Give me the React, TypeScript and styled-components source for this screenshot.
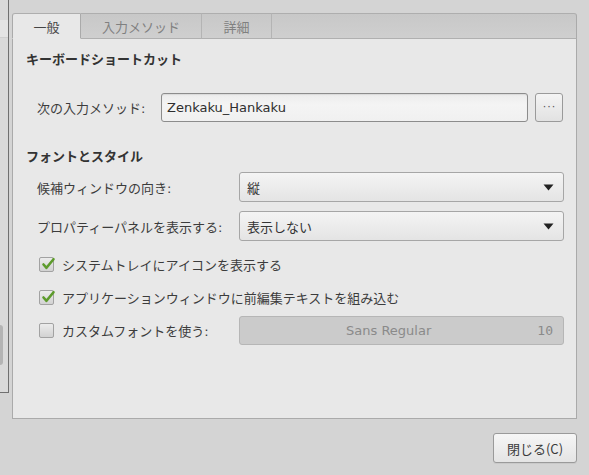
import styled, { createGlobalStyle } from "styled-components";

const GlobalStyle = createGlobalStyle`
  html, body {
    margin: 0;
    padding: 0;
    background: #d4d4d4;
  }
  body {
    width: 589px;
    height: 475px;
    overflow: hidden;
    font-family: "DejaVu Sans", "Noto Sans CJK JP", sans-serif;
    font-size: 13px;
    color: #3c3c3c;
  }
`;

const tabs = ["一般", "入力メソッド", "詳細"];

export default function App() {
  return (
    <>
      <GlobalStyle />
      <Screen>
        <BehindWindow>
          <BehindTab />
          <BehindKnob />
        </BehindWindow>
        <Dialog>
          <Notebook>
            <TabStrip>
              {tabs.map((t, i) => (
                <Tab key={t} active={i === 0} w={[69, 121, 70][i]}>
                  {t}
                </Tab>
              ))}
              <TabFill />
            </TabStrip>
            <Page>
              <SectionTitle>キーボードショートカット</SectionTitle>
              <EntryRow>
                <Label>次の入力メソッド:</Label>
                <Entry>Zenkaku_Hankaku</Entry>
                <SmallButton>
                  <Dots>···</Dots>
                </SmallButton>
              </EntryRow>

              <SectionTitle top={25}>フォントとスタイル</SectionTitle>
              <ComboRow top={7}>
                <Label>候補ウィンドウの向き:</Label>
                <Combo>
                  <span>縦</span>
                  <Arrow />
                </Combo>
              </ComboRow>
              <ComboRow top={9}>
                <Label>プロパティーパネルを表示する:</Label>
                <Combo>
                  <span>表示しない</span>
                  <Arrow />
                </Combo>
              </ComboRow>

              <CheckList>
                <CheckRow>
                  <CheckBox checked>
                    <CheckMark />
                  </CheckBox>
                  <span>システムトレイにアイコンを表示する</span>
                </CheckRow>
                <CheckRow>
                  <CheckBox checked>
                    <CheckMark />
                  </CheckBox>
                  <span>アプリケーションウィンドウに前編集テキストを組み込む</span>
                </CheckRow>
                <CheckRow>
                  <CheckBox />
                  <FontLabel>カスタムフォントを使う:</FontLabel>
                  <FontButton>
                    <FontName>Sans Regular</FontName>
                    <FontSize>10</FontSize>
                  </FontButton>
                </CheckRow>
              </CheckList>
            </Page>
          </Notebook>
          <Footer>
            <CloseButton>閉じる(C)</CloseButton>
          </Footer>
        </Dialog>
      </Screen>
    </>
  );
}

function Arrow() {
  return (
    <svg width="11" height="7" viewBox="0 0 11 7">
      <path d="M0.5 0.5 H10.5 L5.5 6.5 Z" fill="#222" />
    </svg>
  );
}

function CheckMark() {
  return (
    <svg width="15" height="14" viewBox="0 0 15 14" style={{ position: "absolute", left: 1, top: -1 }}>
      <path
        d="M2.5 7.5 L5.5 10.8 L12.5 2.2"
        fill="none"
        stroke="#5d9b2c"
        strokeWidth="2.6"
        strokeLinecap="round"
        strokeLinejoin="round"
      />
    </svg>
  );
}

const Screen = styled.div`
  display: flex;
  width: 589px;
  height: 475px;
`;

const BehindWindow = styled.div`
  position: relative;
  width: 8px;
  height: 392px;
  flex: none;
  background: #dadada;
  border-right: 1px solid #707070;
  border-bottom: 1px solid #707070;
`;

const BehindTab = styled.div`
  position: absolute;
  left: 0;
  top: 20px;
  width: 8px;
  height: 17px;
  background: #e4e4e4;
  border-bottom: 1px solid #cfcfcf;
`;

const BehindKnob = styled.div`
  position: absolute;
  left: 0;
  top: 325px;
  width: 3px;
  height: 40px;
  background: #b4b4b4;
  border-radius: 0 3px 3px 0;
`;

const Dialog = styled.div`
  display: flex;
  flex-direction: column;
  width: 565px;
  margin-left: 3px;
  padding-top: 13px;
`;

const Notebook = styled.div`
  display: flex;
  flex-direction: column;
  width: 565px;
`;

const TabStrip = styled.div`
  display: flex;
  height: 26px;
`;

const Tab = styled.div<{ active?: boolean; w: number }>`
  width: ${({ w }) => w}px;
  box-sizing: border-box;
  display: flex;
  align-items: center;
  justify-content: center;
  font-family: "Noto Sans CJK JP", sans-serif;
  font-size: 13px;
  color: ${({ active }) => (active ? "#444" : "#808080")};
  background: ${({ active }) =>
    active ? "#e8e8e8" : "linear-gradient(#c8c8c8, #cfcfcf)"};
  border-top: 1px solid #aeaeae;
  border-left: ${({ active }) => (active ? "1px solid #aaa" : "none")};
  border-right: 1px solid ${({ active }) => (active ? "#aaa" : "#b4b4b4")};
  border-bottom: 1px solid ${({ active }) => (active ? "#e8e8e8" : "#b0b0b0")};
  border-radius: ${({ active }) => (active ? "3px 0 0 0" : "0")};
  padding-top: 1px;
`;

const TabFill = styled.div`
  flex: 1;
  box-sizing: border-box;
  background: linear-gradient(#c8c8c8, #cfcfcf);
  border-top: 1px solid #aeaeae;
  border-right: 1px solid #aaa;
  border-bottom: 1px solid #b0b0b0;
  border-radius: 0 3px 0 0;
`;

const Page = styled.div`
  box-sizing: border-box;
  height: 380px;
  background: #e8e8e8;
  border: 1px solid #aaa;
  border-top: none;
  padding: 0 12px 0 13px;
  display: flex;
  flex-direction: column;
`;

const SectionTitle = styled.div<{ top?: number }>`
  margin-top: ${({ top }) => top ?? 11}px;
  height: 18px;
  line-height: 18px;
  font-family: "Noto Sans CJK JP", sans-serif;
  font-weight: bold;
  font-size: 13px;
  color: #333;
`;

const EntryRow = styled.div`
  display: flex;
  align-items: center;
  margin-top: 25px;
  height: 29px;
  padding-left: 11px;
`;

const Label = styled.span`
  width: 202px;
  flex: none;
  font-family: "DejaVu Sans", "Noto Sans CJK JP", sans-serif;
`;

const Entry = styled.div`
  margin-left: -78px;
  box-sizing: border-box;
  width: 367px;
  height: 29px;
  display: flex;
  align-items: center;
  padding-left: 5px;
  border: 1px solid #8c8c8c;
  border-radius: 3px;
  background: linear-gradient(#ececec, #f4f4f4 40%, #f0f0f0);
  color: #2e2e2e;
  box-shadow: inset 0 1px 1px rgba(0, 0, 0, 0.08);
`;

const SmallButton = styled.div`
  margin-left: 7px;
  box-sizing: border-box;
  width: 28px;
  height: 29px;
  border: 1px solid #9a9a9a;
  border-radius: 3px;
  background: linear-gradient(#f4f4f4, #e2e2e2);
  display: flex;
  align-items: center;
  justify-content: center;
`;

const Dots = styled.span`
  font-size: 11px;
  letter-spacing: 1px;
  color: #555;
  margin-top: -3px;
  padding-left: 1px;
`;

const ComboRow = styled.div<{ top: number }>`
  display: flex;
  align-items: center;
  margin-top: ${({ top }) => top}px;
  height: 30px;
  padding-left: 11px;
`;

const Combo = styled.div`
  box-sizing: border-box;
  width: 325px;
  height: 30px;
  display: flex;
  align-items: center;
  justify-content: space-between;
  padding: 0 9px 0 7px;
  border: 1px solid #a6a6a6;
  border-radius: 3px;
  background: linear-gradient(#f4f4f4, #e4e4e4);
  color: #333;
  font-family: "Noto Sans CJK JP", sans-serif;
`;

const CheckList = styled.div`
  display: flex;
  flex-direction: column;
  gap: 4px;
  margin-top: 9px;
  padding-left: 13px;
`;

const CheckRow = styled.div`
  display: flex;
  align-items: center;
  height: 29px;
  font-family: "Noto Sans CJK JP", sans-serif;
`;

const CheckBox = styled.div<{ checked?: boolean }>`
  position: relative;
  box-sizing: border-box;
  width: 15px;
  height: 15px;
  flex: none;
  margin-right: 8px;
  border: 1px solid #a2a2a2;
  border-radius: 2px;
  background: linear-gradient(#ececec, #d2d2d2);
`;

const FontLabel = styled.span`
  width: 177px;
  flex: none;
  font-family: "DejaVu Sans", "Noto Sans CJK JP", sans-serif;
`;

const FontButton = styled.div`
  box-sizing: border-box;
  width: 325px;
  height: 29px;
  display: flex;
  align-items: center;
  padding: 0 10px 0 0;
  border: 1px solid #b6b6b6;
  border-radius: 3px;
  background: #cbcbcb;
  color: #8a8a8a;
`;

const FontName = styled.span`
  flex: 1;
  text-align: center;
  font-family: "DejaVu Sans", sans-serif;
`;

const FontSize = styled.span`
  font-family: "DejaVu Sans Mono", monospace;
`;

const Footer = styled.div`
  display: flex;
  justify-content: flex-end;
  margin-top: 14px;
`;

const CloseButton = styled.div`
  box-sizing: border-box;
  width: 84px;
  height: 30px;
  display: flex;
  align-items: center;
  justify-content: center;
  border: 1px solid #9a9a9a;
  border-radius: 3px;
  background: linear-gradient(#f6f6f6, #e4e4e4);
  color: #3a3a3a;
  font-family: "Noto Sans CJK JP", sans-serif;
  box-shadow: 0 1px 0 rgba(0, 0, 0, 0.05);
`;
